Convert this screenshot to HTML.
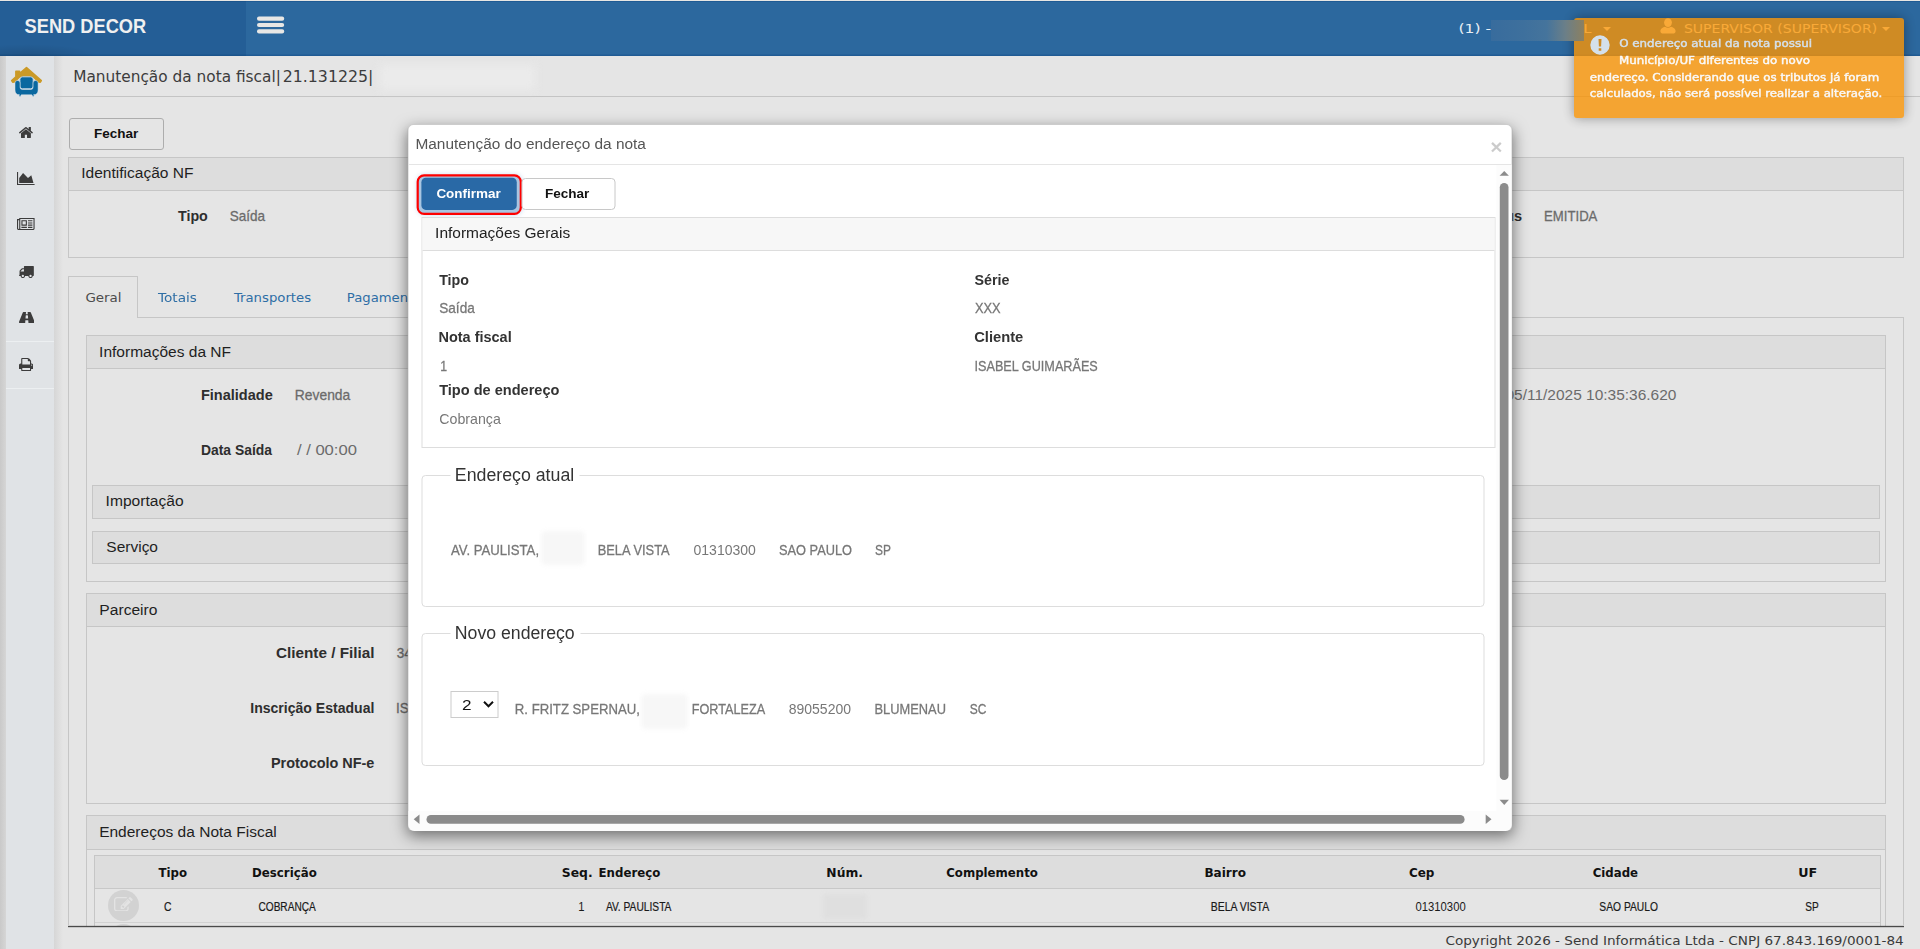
<!DOCTYPE html>
<html lang="pt-BR">
<head>
<meta charset="utf-8">
<title>Manutenção da nota fiscal</title>
<style>
*{box-sizing:border-box;margin:0;padding:0}
html,body{width:1920px;height:949px;overflow:hidden;background:#e5e5e5}
body{position:relative;font-family:"Liberation Sans",sans-serif;font-size:14px;color:#333}
.abs{position:absolute}
.vd{font-family:"DejaVu Sans","Liberation Sans",sans-serif}
.tb{font-family:"Liberation Sans",sans-serif}
.t{position:absolute;white-space:nowrap;line-height:1;transform-origin:0 0}
/* header */
#hdr{position:absolute;left:0;top:0;width:1920px;height:56px;background:#2c689e;border-top:1px solid #e8e6e3;box-shadow:inset 0 1px 0 #205b94, inset 0 -1.5px 0 #205b94}
#brand{position:absolute;left:0;top:0;width:246px;height:55px;background:#245e96;box-shadow:inset 0 1px 0 #1b548c, inset 0 -1.5px 0 #1b548c}
/* sidebar */
#sideshadowL{position:absolute;left:0;top:56px;width:6px;height:893px;background:linear-gradient(90deg,#c9c9c9,#d6d6d6)}
#side{position:absolute;left:6px;top:56px;width:48px;height:893px;background:#e0e3e6}
#sideshadowR{position:absolute;left:54px;top:56px;width:9px;height:893px;background:linear-gradient(90deg,#d6d6d6,#e5e5e5)}
.sep{position:absolute;left:6px;width:48px;height:1px;background:#eceff1}
/* panels */
.pn{position:absolute;border:1px solid #c6c6c6;background:#e5e5e5}
.ph{position:absolute;left:0;top:0;right:0;height:33px;background:#dddddd;border-bottom:1px solid #c6c6c6}
.pht{position:absolute;left:13.5px;top:7px;font-size:15.4px;line-height:1;color:#222;white-space:nowrap}
.lb{font-weight:bold;color:#2e2e2e}
.vl{color:#757575}

.btn0{border:1px solid #adadad;border-radius:3px;background:#e5e5e5}
.sx{transform:scaleX(.9);transform-origin:0 50%}
.sxr{transform:scaleX(.97);transform-origin:100% 50%}
.tabl{font-size:13px;color:#2f6aa3;letter-spacing:.13px}
.th{top:866px;font-size:13px;font-weight:bold;color:#111}
.td{top:901px;font-size:12px;color:#222}

.sxb{font-size:15px;transform:scaleX(.97);transform-origin:0 50%}
.fs{border:1px solid #ddd;border-radius:4px}
.lg{font-size:17.5px;color:#333;background:#fff;text-align:center;height:20px;line-height:20px}
.blr{background:#f7f7f7;filter:blur(2px);border-radius:4px}
.hd{font-size:13px;color:#fff}
#toast{position:absolute;left:1574px;top:18px;width:330px;height:100px;background:#f89406;opacity:.8;border-radius:3px;box-shadow:0 0 12px rgba(0,0,0,.45);color:#fff}
.tm{font-family:"DejaVu Sans","Liberation Sans",sans-serif;font-size:11px;font-weight:bold;color:#fff}
/* modal */
#modal{position:absolute;transform:translateX(.5px);will-change:transform;left:407px;top:124px;width:1105px;height:707px;background:#fff;border-radius:6px;box-shadow:0 5px 15px rgba(0,0,0,.5);border:1px solid rgba(0,0,0,.2)}
.mp{position:absolute;border:1px solid #ddd;background:#fff}
.g{color:#777}
</style>
</head>
<body>
<!-- HEADER -->
<div id="hdr">
  <div id="brand"></div>
  <svg class="abs" style="left:256.9px;top:15px" width="28" height="19" viewBox="0 0 28 19"><g fill="#e8e7e5"><rect x="0" y="0.5" width="27.2" height="4.2" rx="2"/><rect x="0" y="6.9" width="27.2" height="4.2" rx="2"/><rect x="0" y="13.2" width="27.2" height="4.2" rx="2"/></g></svg>
</div>

<div class="t" style="left:24px;top:16px;font-size:20px;font-weight:bold;color:#f0f0f0;transform:translateX(0.62px) scaleX(0.9119)">SEND DECOR</div>
<div class="t vd" style="left:1458px;top:22px;font-size:13px;color:#e8eef5;transform:translateX(0.40px) scaleX(1.2000)">(1) -</div>
<div class="t vd" style="left:73px;top:70px;font-size:15px;color:#3c3c3c;transform:translateX(0.17px) scaleX(1.0228)">Manutenção da nota fiscal|</div>
<div class="t vd" style="left:282px;top:70px;font-size:15px;color:#3c3c3c;transform:translateX(0.75px) scaleX(1.0511)">21.131225|</div>
<!-- SIDEBAR -->
<div class="abs" style="left:0;top:44px;width:100px;height:12px;background:radial-gradient(ellipse 70px 12px at 28px 100%, rgba(0,0,0,.13), rgba(0,0,0,0) 100%)"></div>
<div id="sideshadowL"></div>
<div id="side"></div>
<div id="sideshadowR"></div>
<svg class="abs" style="left:6px;top:60px" width="48" height="50" viewBox="0 0 48 50">
  <path fill="#cb9a27" stroke="#cb9a27" stroke-width="1.6" stroke-linejoin="round" d="M20.5 7.6 L35.3 20.6 L34.3 22.2 L32.6 22 L27.5 17 L13.5 17 L8.4 22 L6.7 22.2 L5.7 20.6 L9.9 16.9 L9.9 11.2 L13.5 11.2 L13.5 13.7 Z"/>
  <rect x="13.9" y="16.8" width="13.3" height="12" rx="2.6" fill="#0a68a0" stroke="#c4d8e6" stroke-width="1"/>
  <path fill="#0a68a0" stroke="#dfe5ea" stroke-width=".5" d="M9 22.8 Q9 20.5 11.5 20.5 Q14 20.5 14 22.8 L14 27.2 Q14 29.5 16.3 29.5 L24.8 29.5 Q27.1 29.5 27.1 27.2 L27.1 22.8 Q27.1 20.5 29.6 20.5 Q32.1 20.5 32.1 22.8 L32.1 30 Q32.1 34.8 27.4 34.8 L28.5 34.8 L27.2 36.9 L25.8 34.8 L15.3 34.8 L14 36.9 L12.6 34.8 L13.6 34.8 Q9 34.8 9 30 Z"/>
</svg>
<svg class="abs" style="left:19.42px;top:127.04px" width="13.86" height="11.03" viewBox="89.88888549804688 253 1612.22216796875 1283"><path fill="#3c3c3c" d="M1472 992v480q0 26-19 45t-45 19h-384v-384h-256v384h-384q-26 0-45-19t-19-45v-480q0-1 .5-3t.5-3l575-474 575 474q1 2 1 6zm223-69l-62 74q-8 9-21 11h-3q-13 0-21-7l-692-577-692 577q-12 8-24 7-13-2-21-11l-62-74q-8-10-7-23.500t11-21.500l719-599q32-26 76-26t76 26l244 204v-195q0-14 9-23t23-9h192q14 0 23 9t9 23v408l219 182q10 8 11 21.500t-7 23.500z"/></svg>
<svg class="abs" style="left:17.30px;top:172.00px" width="17.60" height="13.20" viewBox="0 128 2048 1536"><path fill="#3c3c3c" d="M2048 1536v128h-2048v-1536h128v1408h1920zm-384-1024l256 896h-1664v-576l448-576 576 576z"/></svg>
<svg class="abs" style="left:17.40px;top:218.05px" width="17.60" height="12.10" viewBox="0 128 2048 1408"><path fill="#3c3c3c" d="M1024 512h-384v384h384v-384zm128 640v128h-640v-128h640zm0-768v640h-640v-640h640zm640 768v128h-512v-128h512zm0-256v128h-512v-128h512zm0-256v128h-512v-128h512zm0-256v128h-512v-128h512zm-1536 960v-960h-128v960q0 26 19 45t45 19 45-19 19-45zm1664 0v-1088h-1536v1088q0 33-11 64h1483q26 0 45-19t19-45zm128-1216v1216q0 80-56 136t-136 56h-1664q-80 0-136-56t-56-136v-1088h256v-128h1792z"/></svg>
<svg class="abs" style="left:19.43px;top:265.85px" width="14.85" height="12.10" viewBox="64 256 1728 1408"><path fill="#3c3c3c" d="M640 1408q0-52-38-90t-90-38-90 38-38 90 38 90 90 38 90-38 38-90zm-384-512h384v-256h-158q-13 0-22 9l-195 195q-9 9-9 22v30zm1280 512q0-52-38-90t-90-38-90 38-38 90 38 90 90 38 90-38 38-90zm256-1088v1024q0 15-4 26.500t-13.500 18.500-16.500 11.500-23.500 6-22.500 2-25.500 0-22.500-.5q0 106-75 181t-181 75-181-75-75-181h-384q0 106-75 181t-181 75-181-75-75-181h-64q-3 0-22.500.5t-25.500 0-22.500-2-23.500-6-16.500-11.500-13.500-18.500-4-26.500q0-26 19-45t45-19v-320q0-8-.5-35t0-38 2.500-34.500 6.500-37 14-30.500 22.500-30l198-198q19-19 50.500-32t58.500-13h160v-192q0-26 19-45t45-19h1024q26 0 45 19t19 45z"/></svg>
<svg class="abs" style="left:18.68px;top:311.90px" width="15.64" height="11.00" viewBox="50 256 1820 1280"><path fill="#3c3c3c" d="M1111 996v-4l-24-320q-1-13-11-22.500t-23-9.500h-186q-13 0-23 9.500t-11 22.500l-24 320v4q-1 12 8 20t21 8h244q12 0 21-8t8-20zm759 467q0 73-46 73h-704q13 0 22-9.500t8-22.500l-20-256q-1-13-11-22.500t-23-9.500h-272q-13 0-23 9.500t-11 22.500l-20 256q-1 13 8 22.500t22 9.500h-704q-46 0-46-73 0-54 26-116l417-1044q8-19 26-33t38-14h339q-13 0-23 9.500t-11 22.500l-15 192q-1 14 8 23t22 9h166q13 0 22-9t8-23l-15-192q-1-13-11-22.500t-23-9.500h339q20 0 38 14t26 33l417 1044q26 62 26 116z"/></svg>
<svg class="abs" style="left:19.15px;top:357.90px" width="14.30" height="13.20" viewBox="64 128 1664 1536"><path fill="#3c3c3c" d="M448 1536h896v-256h-896v256zm0-640h896v-384h-160q-40 0-68-28t-28-68v-160h-640v640zm1152 64q0-26-19-45t-45-19-45 19-19 45 19 45 45 19 45-19 19-45zm128 0v416q0 13-9.500 22.500t-22.500 9.500h-224v160q0 40-28 68t-68 28h-960q-40 0-68-28t-28-68v-160h-224q-13 0-22.500-9.500t-9.500-22.500v-416q0-79 56.500-135.500t135.500-56.500h64v-544q0-40 28-68t68-28h672q40 0 88 20t76 48l152 152q28 28 48 76t20 88v256h64q79 0 135.500 56.500t56.500 135.500z"/></svg>
<div class="sep" style="top:341px"></div>
<div class="sep" style="top:388px"></div>

<!-- TITLE -->
<div class="abs" style="left:54px;top:96px;width:1866px;height:1px;background:#c4c4c4"></div>


<div class="abs" style="left:380px;top:65px;width:155px;height:25px;background:#ebebeb;filter:blur(4px)"></div>
<!-- MAIN CONTENT -->
<div id="main">
  <div class="abs btn0" style="left:69px;top:118px;width:95px;height:32px"></div>

  <!-- Identificação NF -->
  <div class="pn" style="left:68px;top:157px;width:1836px;height:101px"><div class="ph"></div></div>

  <!-- tabs -->
  <div class="abs" style="left:68px;top:317px;width:1836px;height:1px;background:#c6c6c6"></div>
  <div class="abs" style="left:68px;top:276px;width:70px;height:42px;border:1px solid #c6c6c6;border-bottom:none;background:#e5e5e5;border-radius:1px 1px 0 0"></div>
  <!-- tab content borders -->
  <div class="abs" style="left:68px;top:317px;width:1px;height:608px;background:#c6c6c6"></div>
  <div class="abs" style="left:1903px;top:317px;width:1px;height:608px;background:#c6c6c6"></div>

  <!-- Informações da NF -->
  <div class="pn" style="left:86px;top:335px;width:1800px;height:247px"><div class="ph"></div></div>
  <div class="pn" style="left:92px;top:485px;width:1788px;height:34px;background:#dddddd"></div>
  <div class="pn" style="left:92px;top:531px;width:1788px;height:33px;background:#dddddd"></div>

  <!-- Parceiro -->
  <div class="pn" style="left:86px;top:593px;width:1800px;height:211px"><div class="ph"></div></div>

  <!-- Endereços da Nota Fiscal -->
  <div class="pn" style="left:86px;top:815px;width:1800px;height:140px"><div class="ph" style="height:34px"></div></div>
  <div class="abs" style="left:94px;top:855px;width:1787px;height:80px;border:1px solid #c6c6c6"></div>
  <div class="abs" style="left:95px;top:856px;width:1785px;height:33px;background:#dddddd;border-bottom:1px solid #c8c8c8"></div>
  <div class="abs" style="left:95px;top:922px;width:1785px;height:1px;background:#d2d2d2"></div>
  <div class="abs" style="left:108px;top:890px;width:31px;height:31px;border-radius:50%;background:#d2d2d2"></div>
  <div class="abs" style="left:108px;top:924px;width:31px;height:31px;border-radius:50%;background:#d2d2d2"></div>
  <svg class="abs" style="left:114.23px;top:896.60px" width="18.64" height="14.71" viewBox="0 128 1784 1408"><path fill="#e3e3e3" d="M888 1184l116-116-152-152-116 116v56h96v96h56zm440-720q-16-16-33 1l-350 350q-17 17-1 33t33-1l350-350q17-17 1-33zm80 594v190q0 119-84.500 203.500t-203.500 84.500h-832q-119 0-203.500-84.500t-84.500-203.500v-832q0-119 84.500-203.500t203.500-84.500h832q63 0 117 25 15 7 18 23 3 17-9 29l-49 49q-14 14-32 8-23-6-45-6h-832q-66 0-113 47t-47 113v832q0 66 47 113t113 47h832q66 0 113-47t47-113v-126q0-13 9-22l64-64q15-15 35-7t20 29zm-96-738l288 288-672 672h-288v-288zm444 132l-92 92-288-288 92-92q28-28 68-28t68 28l152 152q28 28 28 68t-28 68z"/></svg>
  <div class="abs" style="left:823px;top:894px;width:44px;height:25px;border-radius:3px;background:#dfdfdf;filter:blur(2px)"></div>

<div class="t" style="left:93px;top:127px;font-size:13.33px;font-weight:bold;color:#111;transform:translateX(0.99px) scaleX(1.0141)">Fechar</div>
<div class="t" style="left:81px;top:165px;font-size:15.4px;color:#1f1f1f;transform:translateX(0.18px) scaleX(1.0101)">Identificação NF</div>
<div class="t" style="left:177px;top:208px;font-size:15px;font-weight:bold;color:#2e2e2e;transform:translateX(0.96px) scaleX(0.9508)">Tipo</div>
<div class="t" style="left:229px;top:208px;font-size:15px;color:#6b6b6b;transform:translateX(0.72px) scaleX(0.9013);-webkit-text-stroke:0.3px #6b6b6b">Saída</div>
<div class="t" style="left:1477px;top:208px;font-size:15px;font-weight:bold;color:#2e2e2e;transform:translateX(0.71px) scaleX(0.9700)">Status</div>
<div class="t" style="left:1544px;top:208px;font-size:15px;color:#6b6b6b;transform:translateX(0.11px) scaleX(0.8756);-webkit-text-stroke:0.3px #6b6b6b">EMITIDA</div>
<div class="t vd" style="left:85px;top:291px;font-size:13px;color:#4c4c4c;transform:translateX(0.42px) scaleX(1.0333)">Geral</div>
<div class="t vd" style="left:158px;top:291px;font-size:13px;color:#2e6ea5;transform:translateX(0.00px) scaleX(1.0493)">Totais</div>
<div class="t vd" style="left:233px;top:291px;font-size:13px;color:#2e6ea5;transform:translateX(0.90px) scaleX(1.0187)">Transportes</div>
<div class="t vd" style="left:346px;top:291px;font-size:13px;color:#2e6ea5;transform:translateX(0.83px) scaleX(1.0150)">Pagamentos</div>
<div class="t" style="left:99px;top:344px;font-size:15.4px;color:#1f1f1f;transform:translateX(0.09px) scaleX(1.0082)">Informações da NF</div>
<div class="t" style="left:200px;top:387px;font-size:15px;font-weight:bold;color:#2e2e2e;transform:translateX(0.93px) scaleX(0.9683)">Finalidade</div>
<div class="t" style="left:294px;top:387px;font-size:15px;color:#6b6b6b;transform:translateX(0.85px) scaleX(0.9226);-webkit-text-stroke:0.3px #6b6b6b">Revenda</div>
<div class="t" style="left:1505px;top:387px;font-size:15px;color:#6b6b6b;transform:translateX(0.48px) scaleX(1.0316)">05/11/2025 10:35:36.620</div>
<div class="t" style="left:200px;top:442px;font-size:15px;font-weight:bold;color:#2e2e2e;transform:translateX(0.97px) scaleX(0.9267)">Data Saída</div>
<div class="t" style="left:296px;top:442px;font-size:15px;color:#6b6b6b;transform:translateX(0.90px) scaleX(1.1084)">/ / 00:00</div>
<div class="t" style="left:105px;top:493px;font-size:15.4px;color:#1f1f1f;transform:translateX(0.58px) scaleX(1.0140)">Importação</div>
<div class="t" style="left:106px;top:539px;font-size:15.4px;color:#1f1f1f;transform:translateX(0.35px) scaleX(1.0060)">Serviço</div>
<div class="t" style="left:99px;top:602px;font-size:15.4px;color:#1f1f1f;transform:translateX(0.33px) scaleX(1.0144)">Parceiro</div>
<div class="t" style="left:275px;top:645px;font-size:15px;font-weight:bold;color:#2e2e2e;transform:translateX(0.93px) scaleX(1.0206)">Cliente / Filial</div>
<div class="t" style="left:396px;top:645px;font-size:15px;color:#6b6b6b;transform:translateX(0.85px) scaleX(0.9000);-webkit-text-stroke:0.3px #6b6b6b">34</div>
<div class="t" style="left:250px;top:700px;font-size:15px;font-weight:bold;color:#2e2e2e;transform:translateX(0.26px) scaleX(0.9364)">Inscrição Estadual</div>
<div class="t" style="left:395px;top:700px;font-size:15px;color:#6b6b6b;transform:translateX(0.95px) scaleX(0.9000);-webkit-text-stroke:0.3px #6b6b6b">ISENTO</div>
<div class="t" style="left:270px;top:755px;font-size:15px;font-weight:bold;color:#2e2e2e;transform:translateX(0.94px) scaleX(0.9623)">Protocolo NF-e</div>
<div class="t" style="left:99px;top:824px;font-size:15.4px;color:#1f1f1f;transform:translateX(0.14px) scaleX(1.0080)">Endereços da Nota Fiscal</div>
<div class="t vd" style="left:158px;top:866px;font-size:13px;font-weight:bold;color:#111;transform:translateX(0.50px) scaleX(0.9032)">Tipo</div>
<div class="t vd" style="left:252px;top:866px;font-size:13px;font-weight:bold;color:#111;transform:translateX(0.07px) scaleX(0.9065)">Descrição</div>
<div class="t vd" style="left:561px;top:866px;font-size:13px;font-weight:bold;color:#111;transform:translateX(0.85px) scaleX(0.9500)">Seq.</div>
<div class="t vd" style="left:598px;top:866px;font-size:13px;font-weight:bold;color:#111;transform:translateX(0.57px) scaleX(0.9057)">Endereço</div>
<div class="t vd" style="left:826px;top:866px;font-size:13px;font-weight:bold;color:#111;transform:translateX(0.32px) scaleX(0.9472)">Núm.</div>
<div class="t vd" style="left:946px;top:866px;font-size:13px;font-weight:bold;color:#111;transform:translateX(0.22px) scaleX(0.9040)">Complemento</div>
<div class="t vd" style="left:1204px;top:866px;font-size:13px;font-weight:bold;color:#111;transform:translateX(0.44px) scaleX(0.9256)">Bairro</div>
<div class="t vd" style="left:1408px;top:866px;font-size:13px;font-weight:bold;color:#111;transform:translateX(0.91px) scaleX(0.9219)">Cep</div>
<div class="t vd" style="left:1592px;top:866px;font-size:13px;font-weight:bold;color:#111;transform:translateX(0.72px) scaleX(0.9026)">Cidade</div>
<div class="t vd" style="left:1798px;top:866px;font-size:13px;font-weight:bold;color:#111;transform:translateX(0.18px) scaleX(0.9765)">UF</div>
<div class="t" style="left:164px;top:901px;font-size:12px;color:#1a1a1a;transform:translateX(0.07px) scaleX(0.8645);-webkit-text-stroke:0.2px #1a1a1a">C</div>
<div class="t" style="left:258px;top:901px;font-size:12px;color:#1a1a1a;transform:translateX(0.48px) scaleX(0.8415);-webkit-text-stroke:0.2px #1a1a1a">COBRANÇA</div>
<div class="t" style="left:578px;top:901px;font-size:12px;color:#1a1a1a;transform:translateX(0.16px) scaleX(0.9400)">1</div>
<div class="t" style="left:605px;top:901px;font-size:12px;color:#1a1a1a;transform:translateX(0.90px) scaleX(0.8519);-webkit-text-stroke:0.2px #1a1a1a">AV. PAULISTA</div>
<div class="t" style="left:1210px;top:901px;font-size:12px;color:#1a1a1a;transform:translateX(0.73px) scaleX(0.8697);-webkit-text-stroke:0.2px #1a1a1a">BELA VISTA</div>
<div class="t" style="left:1415px;top:901px;font-size:12px;color:#1a1a1a;transform:translateX(0.53px) scaleX(0.9390)">01310300</div>
<div class="t" style="left:1599px;top:901px;font-size:12px;color:#1a1a1a;transform:translateX(0.37px) scaleX(0.8548);-webkit-text-stroke:0.2px #1a1a1a">SAO PAULO</div>
<div class="t" style="left:1805px;top:901px;font-size:12px;color:#1a1a1a;transform:translateX(0.18px) scaleX(0.8400);-webkit-text-stroke:0.2px #1a1a1a">SP</div>
<div class="t vd" style="left:1445px;top:934px;font-size:13px;color:#3a3a3a;transform:translateX(0.42px) scaleX(1.0461);z-index:5">Copyright 2026 - Send Informática Ltda - CNPJ 67.843.169/0001-84</div>
  <!-- footer -->
  <div class="abs" style="left:63px;top:926px;width:1857px;height:23px;background:#e5e5e5"></div>
  <div class="abs" style="left:68px;top:925px;width:1836px;height:1px;background:rgba(0,0,0,.1)"></div>
  <div class="abs" style="left:68px;top:926px;width:1836px;height:1px;background:#4a4a4a"></div>
  <div class="abs" style="left:68px;top:927px;width:1836px;height:1px;background:rgba(0,0,0,.13)"></div>
</div>



<!-- MODAL -->
<div id="modal">
  <div class="abs" style="left:0;top:39px;width:1103px;height:1px;background:#e5e5e5"></div>
  <div class="t" id="mclose" style="left:1081.7px;top:11px;font-size:21px;font-weight:bold;color:#000;opacity:.2">×</div>
  <!-- scrollbars -->
  <div class="abs" style="left:1088px;top:40px;width:15px;height:646px;background:#fcfcfc"></div>
  <div class="abs" style="left:0px;top:686px;width:1103px;height:20px;background:#fcfcfc;border-radius:0 0 6px 6px"></div>
  <svg class="abs" style="left:1088px;top:40px" width="15" height="646" viewBox="0 0 15 646"><g fill="#8b8b8b"><path d="M3.1 10.8 L7.75 5.9 L12.4 10.8 Z"/><rect x="3.3" y="18" width="8.7" height="597" rx="4.35"/><path d="M3.1 634.7 L12.4 634.7 L7.75 639.9 Z"/></g></svg>
  <svg class="abs" style="left:0px;top:686px" width="1103" height="20" viewBox="0 0 1103 20"><g fill="#8b8b8b"><path d="M11 3.5 L11 13 L5.2 8.25 Z"/><rect x="18" y="4" width="1038.1" height="8.8" rx="4.4"/><path d="M1077.2 3.5 L1083 8.25 L1077.2 13 Z"/></g></svg>

  <!-- buttons -->
  <svg class="abs" style="left:-2px;top:39px;overflow:visible" width="130" height="62" viewBox="0 0 130 62">
    <defs><filter id="glow" x="-20%" y="-40%" width="140%" height="180%"><feGaussianBlur stdDeviation="2.5"/></filter></defs>
    <rect x="10.6" y="10.25" width="105.3" height="40.65" rx="7.5" fill="#6f9bd0" opacity=".35" filter="url(#glow)"/>
    <rect x="11.2" y="11.35" width="103.1" height="38.45" rx="6.4" fill="#a9c5e1" stroke="#ff0000" stroke-width="2.2"/>
    <rect x="14.9" y="13.7" width="95.35" height="32.2" rx="4.5" fill="#2969a6"/>
  </svg>
  <div class="abs" style="left:112.6px;top:53px;width:94.4px;height:32px;border:1px solid #c8c8c8;border-radius:4px;background:#fff"></div>

  <!-- Informações Gerais -->
  <div class="mp" style="left:13px;top:92px;width:1074px;height:231px"></div>
  <div class="abs" style="left:14px;top:93px;width:1072px;height:33px;background:#f7f7f7;border-bottom:1px solid #ddd"></div>

  <!-- Endereço atual -->
  <div class="abs fs" style="left:13px;top:350px;width:1063px;height:132px"></div>
  <div class="abs" style="left:41.8px;top:348px;width:129.4px;height:5px;background:#fff"></div>
  <div class="abs blr" style="left:133px;top:406px;width:43px;height:34px"></div>

  <!-- Novo endereço -->
  <div class="abs fs" style="left:13px;top:508px;width:1063px;height:133px"></div>
  <div class="abs" style="left:41.8px;top:506px;width:130.5px;height:5px;background:#fff"></div>
  <div class="abs" style="left:42px;top:566px;width:48px;height:27px;border:1px solid #ccc;background:#fff"></div>
  <svg class="abs" style="left:74px;top:575px" width="12" height="9" viewBox="0 0 12 9"><path d="M1.5 1.8 L6 6.3 L10.5 1.8" fill="none" stroke="#111" stroke-width="2"/></svg>
  <div class="abs blr" style="left:233px;top:569px;width:46px;height:35px"></div>
</div>



<div class="t" style="left:415px;top:136px;font-size:15.4px;color:#555;transform:translateX(0.45px) scaleX(1.0013)">Manutenção do endereço da nota</div>
<div class="t" style="left:436px;top:187px;font-size:13.33px;font-weight:bold;color:#fff;transform:translateX(0.39px) scaleX(1.0111)">Confirmar</div>
<div class="t" style="left:544px;top:187px;font-size:13.33px;font-weight:bold;color:#111;transform:translateX(0.88px) scaleX(1.0165)">Fechar</div>
<div class="t" style="left:435px;top:225px;font-size:15.4px;color:#222;transform:translateX(0.09px) scaleX(1.0057)">Informações Gerais</div>
<div class="t" style="left:439px;top:272px;font-size:15px;font-weight:bold;color:#333;transform:translateX(0.16px) scaleX(0.9508)">Tipo</div>
<div class="t" style="left:439px;top:300px;font-size:15px;color:#777;transform:translateX(0.22px) scaleX(0.9065);-webkit-text-stroke:0.3px #777">Saída</div>
<div class="t" style="left:438px;top:329px;font-size:15px;font-weight:bold;color:#333;transform:translateX(0.43px) scaleX(0.9654)">Nota fiscal</div>
<div class="t" style="left:440px;top:358px;font-size:15px;color:#777;transform:translateX(0.28px) scaleX(0.8160);-webkit-text-stroke:0.3px #777">1</div>
<div class="t" style="left:439px;top:382px;font-size:15px;font-weight:bold;color:#333;transform:translateX(0.16px) scaleX(0.9707)">Tipo de endereço</div>
<div class="t" style="left:439px;top:411px;font-size:15px;color:#777;transform:translateX(0.29px) scaleX(0.9463)">Cobrança</div>
<div class="t" style="left:974px;top:272px;font-size:15px;font-weight:bold;color:#333;transform:translateX(0.42px) scaleX(0.9538)">Série</div>
<div class="t" style="left:974px;top:300px;font-size:15px;color:#777;transform:translateX(0.97px) scaleX(0.8552);-webkit-text-stroke:0.3px #777">XXX</div>
<div class="t" style="left:974px;top:329px;font-size:15px;font-weight:bold;color:#333;transform:translateX(0.16px) scaleX(0.9826)">Cliente</div>
<div class="t" style="left:974px;top:358px;font-size:15px;color:#777;transform:translateX(0.54px) scaleX(0.8431);-webkit-text-stroke:0.3px #777">ISABEL GUIMARÃES</div>
<div class="t" style="left:454px;top:467px;font-size:17.5px;color:#333;transform:translateX(0.78px) scaleX(1.0148)">Endereço atual</div>
<div class="t" style="left:451px;top:542px;font-size:15px;color:#777;transform:translateX(0.00px) scaleX(0.8778);-webkit-text-stroke:0.3px #777">AV. PAULISTA,</div>
<div class="t" style="left:597px;top:542px;font-size:15px;color:#777;transform:translateX(0.63px) scaleX(0.8582);-webkit-text-stroke:0.3px #777">BELA VISTA</div>
<div class="t" style="left:693px;top:542px;font-size:15px;color:#777;transform:translateX(0.53px) scaleX(0.9344)">01310300</div>
<div class="t" style="left:778px;top:542px;font-size:15px;color:#777;transform:translateX(0.96px) scaleX(0.8536);-webkit-text-stroke:0.3px #777">SAO PAULO</div>
<div class="t" style="left:875px;top:542px;font-size:15px;color:#777;transform:translateX(0.00px) scaleX(0.7946);-webkit-text-stroke:0.3px #777">SP</div>
<div class="t" style="left:454px;top:625px;font-size:17.5px;color:#333;transform:translateX(0.78px) scaleX(1.0103)">Novo endereço</div>
<div class="t" style="left:462px;top:698px;font-size:14.5px;color:#111;transform:translateX(0.11px) scaleX(1.1846)">2</div>
<div class="t" style="left:514px;top:701px;font-size:15px;color:#777;transform:translateX(0.80px) scaleX(0.8779);-webkit-text-stroke:0.3px #777">R. FRITZ SPERNAU,</div>
<div class="t" style="left:691px;top:701px;font-size:15px;color:#777;transform:translateX(0.74px) scaleX(0.8444);-webkit-text-stroke:0.3px #777">FORTALEZA</div>
<div class="t" style="left:788px;top:701px;font-size:15px;color:#777;transform:translateX(0.70px) scaleX(0.9333)">89055200</div>
<div class="t" style="left:874px;top:701px;font-size:15px;color:#777;transform:translateX(0.53px) scaleX(0.8568);-webkit-text-stroke:0.3px #777">BLUMENAU</div>
<div class="t" style="left:969px;top:701px;font-size:15px;color:#777;transform:translateX(0.70px) scaleX(0.8000);-webkit-text-stroke:0.3px #777">SC</div>
<!-- header items that sit under the toast -->
<svg class="abs" style="left:1603px;top:27px" width="8" height="4" viewBox="0 0 8 4"><path d="M0 0 L8 0 L4 4 Z" fill="#fff"/></svg>
<svg class="abs" style="left:1660px;top:18px" width="16" height="16" viewBox="0 0 16 16"><g fill="#fff"><ellipse cx="8" cy="4.6" rx="3.9" ry="4.4"/><path d="M0.4 13.2 C0.4 10.4 3 9.3 5 8.7 C6.8 10 9.2 10 11 8.7 C13 9.3 15.6 10.4 15.6 13.2 C15.6 14.8 14.4 15.6 12.8 15.6 L3.2 15.6 C1.6 15.6 0.4 14.8 0.4 13.2 Z"/></g></svg>
<svg class="abs" style="left:1882px;top:27px" width="8" height="4" viewBox="0 0 8 4"><path d="M0 0 L8 0 L4 4 Z" fill="#fff"/></svg>

<div class="t vd" style="left:1583px;top:22px;font-size:13px;color:#fff;transform:translateX(0.42px) scaleX(1.1000)">L</div>
<div class="t vd" style="left:1683px;top:22px;font-size:13px;color:#fff;transform:translateX(0.89px) scaleX(1.0793)">SUPERVISOR (SUPERVISOR)</div>
<!-- TOAST -->
<div id="toast">
  <svg class="abs" style="left:16px;top:17px" width="20" height="20" viewBox="0 0 20 20"><path fill="#fff" fill-rule="evenodd" d="M10 0.3 A9.7 9.7 0 1 0 10 19.7 A9.7 9.7 0 1 0 10 0.3 Z M8.5 4 L11.5 4 L11.1 11.6 L8.9 11.6 Z M8.7 13.3 L11.3 13.3 L11.3 15.8 L8.7 15.8 Z"/></svg>
<div class="t vd" style="left:45px;top:20px;font-size:11px;color:#fff;transform:translateX(0.19px) scaleX(1.0770);-webkit-text-stroke:.45px #fff">O endereço atual da nota possui</div>
<div class="t vd" style="left:44px;top:37px;font-size:11px;color:#fff;transform:translateX(0.92px) scaleX(1.0792);-webkit-text-stroke:.45px #fff">Município/UF diferentes do novo</div>
<div class="t vd" style="left:15px;top:54px;font-size:11px;color:#fff;transform:translateX(0.86px) scaleX(1.0729);-webkit-text-stroke:.45px #fff">endereço. Considerando que os tributos já foram</div>
<div class="t vd" style="left:15px;top:70px;font-size:11px;color:#fff;transform:translateX(0.87px) scaleX(1.0674);-webkit-text-stroke:.45px #fff">calculados, não será possível realizar a alteração.</div>
</div>
<!-- privacy blur block (sits above toast) -->
<div class="abs" style="left:1491px;top:20px;width:93px;height:21px;background:linear-gradient(90deg,#386c9d 0%,#3e709d 35%,#45749c 60%,#6b7f88 80%,#8c8060 100%)"></div>

</body>
</html>
